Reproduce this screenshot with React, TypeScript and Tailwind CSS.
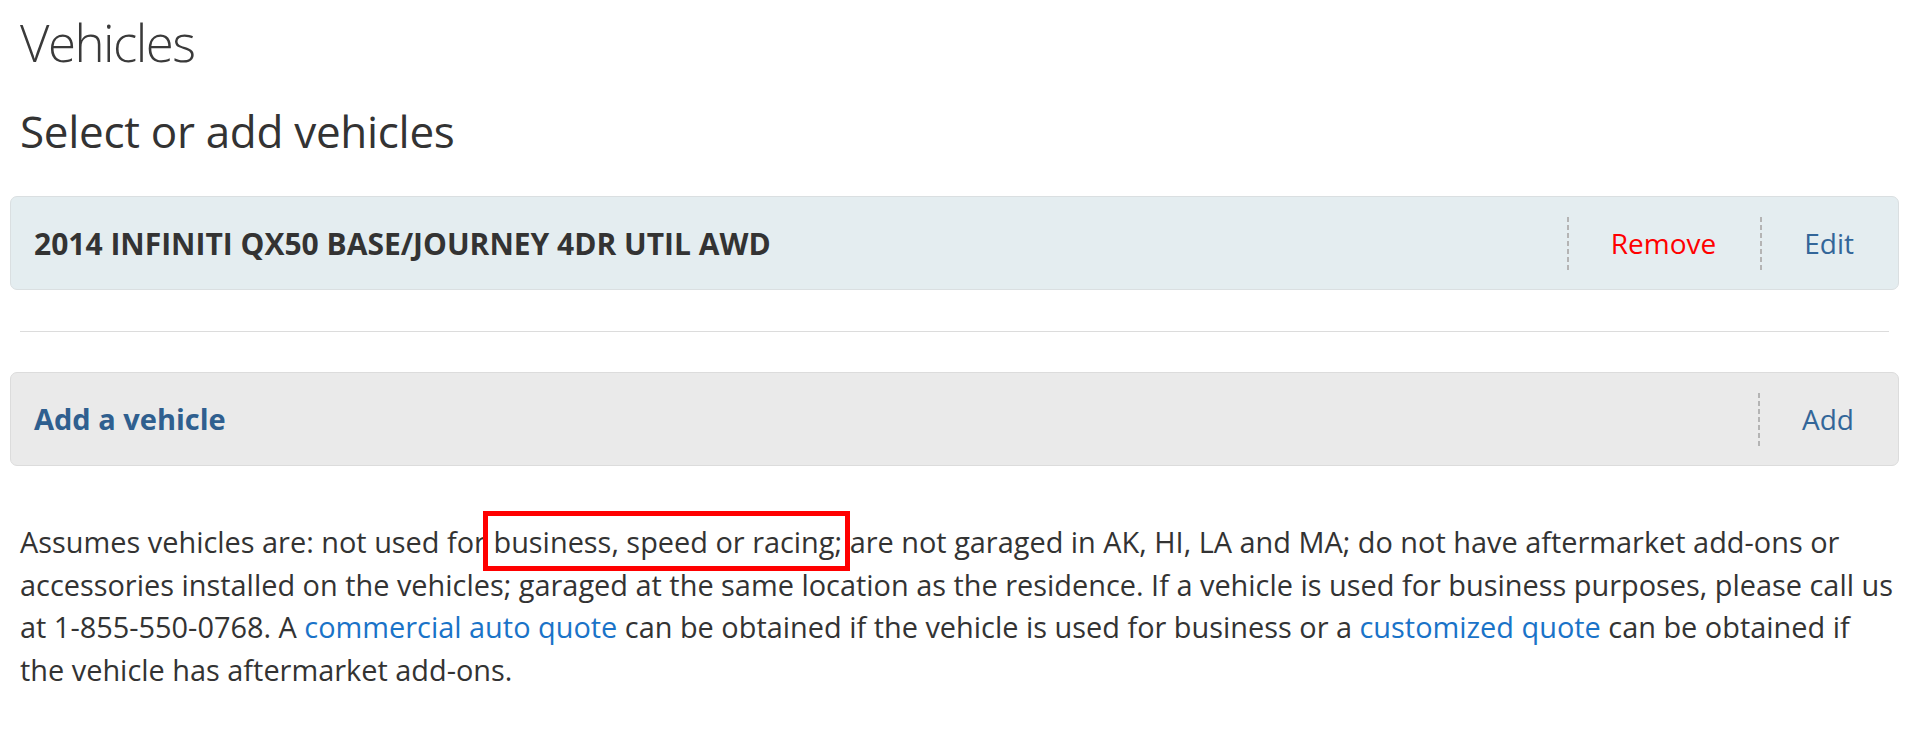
import React from 'react';

const ActionCell = ({ label, color }: { label: string; color: string }) => (
  <div className="relative flex h-[53px] items-center px-[44px]">
    <span className="absolute left-0 top-0 h-full w-[2px] bg-[repeating-linear-gradient(to_bottom,#b4b4b4_0_5px,transparent_5px_8px)]" />
    <span className={`text-[28px] leading-none ${color}`}>{label}</span>
  </div>
);

const App: React.FC = () => {
  return (
    <div className="min-h-[753px] bg-white pl-[10px] pr-[21px] text-[#333] [font-family:'Open_Sans',sans-serif]">
      <h1 className="mx-[10px] mt-[12px] text-[51px] font-light leading-[60px] tracking-[-1.5px] text-[#3a3a3a]">
        Vehicles
      </h1>
      <h2 className="mx-[10px] mt-[33px] text-[44px] font-normal leading-[52px] tracking-[-0.3px]">
        Select or add vehicles
      </h2>

      {/* selected vehicle */}
      <div className="mt-[39px] flex h-[94px] items-center justify-between rounded-[7px] border border-[#dadfe1] bg-[#e4edf0]">
        <div className="pl-[23px] text-[30px] font-bold">2014 INFINITI QX50 BASE/JOURNEY 4DR UTIL AWD</div>
        <div className="flex items-center">
          <ActionCell label="Remove" color="text-[#ff0000]" />
          <ActionCell label="Edit" color="text-[#336699]" />
        </div>
      </div>

      <hr className="mx-[10px] mt-[41px] border-t border-[#dcdcdc]" />

      {/* add vehicle */}
      <div className="mt-[40px] flex h-[94px] items-center justify-between rounded-[7px] border border-[#dcdcdc] bg-[#eaeaea]">
        <div className="pl-[23px] text-[29px] font-bold text-[#2f5f8f]">Add a vehicle</div>
        <div className="flex items-center">
          <ActionCell label="Add" color="text-[#336699]" />
        </div>
      </div>

      <p className="ml-[10px] mr-0 mt-[55px] text-[28.9px] leading-[42.5px]">
        Assumes vehicles are: not used for{' '}
        <span className="relative">
          business, speed or racing;
          <span className="absolute -bottom-[10px] -left-[10px] -right-[8px] -top-[11px] border-[5px] border-[#ff0000]" />
        </span>{' '}
        are not garaged in AK, HI, LA and MA; do not have aftermarket add-ons or accessories installed on the
        vehicles; garaged at the same location as the residence. If a vehicle is used for business purposes,
        please call us at 1-855-550-0768. A{' '}
        <a className="text-[#1a73c8]">commercial auto quote</a> can be obtained if the vehicle is used for
        business or a <a className="text-[#1a73c8]">customized quote</a> can be obtained if the vehicle has
        aftermarket add-ons.
      </p>
    </div>
  );
};

export default App;
